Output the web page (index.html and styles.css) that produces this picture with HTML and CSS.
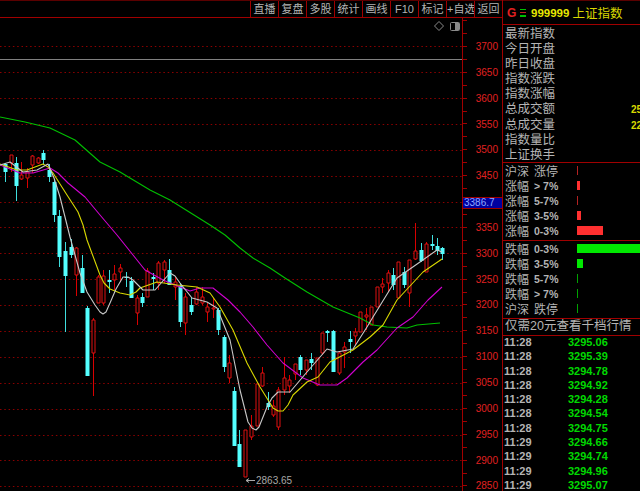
FILE: index.html
```html
<!DOCTYPE html>
<html lang="zh-CN">
<head>
    <meta charset="UTF-8">
    <title>999999 上证指数</title>
    <link rel="stylesheet" href="styles.css">
</head>
<body>
<div class="page">
    <div class="left">
        <div class="toolbar">
            <a>直播</a><a>复盘</a><a>多股</a><a>统计</a><a>画线</a><a>F10</a><a>标记</a><a>+自选</a><a>返回</a>
        </div>
        <div class="chart-row">
            <svg class="chart" viewBox="0 18 462 473" width="462" height="473">
                <g class="grid">
                    <path d="M0 46.5H462M0 72.5H462M0 98.5H462M0 124.5H462M0 150.5H462M0 176.5H462M0 202.5H462M0 227.5H462M0 253.5H462M0 279.5H462M0 305.5H462M0 331.5H462M0 357.5H462M0 383.5H462M0 409.5H462M0 435.5H462M0 460.5H462M0 486.5H462"/>
                </g>
                <path class="limit" d="M0 59.5H462"/>
                <!-- chart tools -->
                <path class="tool" d="M439 21.5l4.5 4.5-4.5 4.5-4.5-4.5z"/>
                <rect class="tool" x="450.5" y="22.5" width="9" height="8" rx="1"/>
                <rect class="tool-fill" x="455" y="23" width="4" height="7"/>

                <!-- candles, wicks first -->
                <path class="wick-dn" d="M5.5 163V182M16.5 157V201M43.5 150V164M49.5 164V182M54.5 180V222M59.5 210V267M65.5 242V332M71.5 239V258M82.5 255V293M87.5 306V376M109.5 270V293M126.5 272V287M131.5 277V298M142.5 293V307M153.5 273V290M169.5 259V285M180.5 283V327M191.5 297V315M218.5 308V335M224.5 335V372M234.5 387V446M239.5 430V467M268.5 392V410M300.5 355V375M311.5 353V370M327.5 330V342M333.5 330V372M350.5 331V353M393.5 268V290M404.5 267V288M421.5 243V262M432.5 235V250M437.5 238V255M442.5 247V260"/>
                <path class="wick-up" d="M11.5 155V172M21.5 162V180M27.5 168V188M32.5 155V173M38.5 157V164M76.5 247V296M93.5 318V396M98.5 275V303M103.5 270V305M114.5 265V290M120.5 264V282M137.5 295V325M147.5 268V297M158.5 261V290M164.5 260V283M175.5 277V300M185.5 293V335M196.5 287V305M202.5 287V305M207.5 303V322M213.5 298V318M229.5 355V383M245.5 430V477M251.5 415V440M257.5 384V426M262.5 367V387M273.5 400V417M278.5 387V430M284.5 357V395M289.5 375V393M295.5 364V380M306.5 360V375M317.5 358V386M322.5 333V355M339.5 352V375M344.5 342V368M355.5 328V345M360.5 312V332M366.5 308V330M371.5 307V325M377.5 287V307M382.5 278V293M388.5 270V292M398.5 262V298M409.5 260V307M415.5 223V260M426.5 242V272"/>
                <path class="body-up" d="M10 155h3V163h-3zM20 175h3V179h-3zM26 172h3V178h-3zM31 156h3V165h-3zM37 158h3V163h-3zM75 248h3V275h-3zM92 320h3V353h-3zM97 277h3V303h-3zM102 276h3V303h-3zM113 274h3V280h-3zM119 268h3V272h-3zM136 298h3V313h-3zM146 271h3V297h-3zM157 263h3V283h-3zM163 262h3V270h-3zM174 282h3V287h-3zM184 297h3V323h-3zM195 292h3V304h-3zM201 297h3V303h-3zM206 307h3V312h-3zM212 308h3V309h-3zM228 363h3V378h-3zM244 430h3V477h-3zM250 426h3V437h-3zM256 384h3V426h-3zM261 373h3V386h-3zM272 406h3V415h-3zM277 390h3V427h-3zM283 378h3V390h-3zM288 380h3V386h-3zM294 364h3V374h-3zM305 360h3V370h-3zM316 358h3V385h-3zM321 333h3V353h-3zM338 353h3V373h-3zM343 347h3V352h-3zM354 332h3V336h-3zM359 312h3V332h-3zM365 315h3V317h-3zM370 307h3V325h-3zM376 287h3V307h-3zM381 284h3V287h-3zM387 273h3V283h-3zM397 262h3V298h-3zM408 260h3V293h-3zM414 251h3V259h-3zM425 244h3V272h-3z"/>
                <path class="body-dn" d="M3.5 164h4V172h-4zM14.5 163h4V186h-4zM41.5 153h4V160h-4zM47.5 170h4V177h-4zM52.5 182h4V215h-4zM57.5 216h4V257h-4zM63.5 251h4V276h-4zM69.5 247h4V255h-4zM80.5 268h4V293h-4zM85.5 308h4V376h-4zM107.5 280h4V282h-4zM124.5 277h4V278h-4zM129.5 281h4V298h-4zM140.5 297h4V303h-4zM151.5 277h4V279h-4zM167.5 270h4V285h-4zM178.5 286h4V322h-4zM189.5 305h4V312h-4zM216.5 310h4V330h-4zM222.5 337h4V367h-4zM232.5 391h4V446h-4zM237.5 444h4V467h-4zM266.5 403h4V407h-4zM298.5 357h4V370h-4zM309.5 359h4V363h-4zM325.5 331h4V333h-4zM331.5 331h4V372h-4zM348.5 339h4V342h-4zM391.5 275h4V285h-4zM402.5 272h4V285h-4zM419.5 250h4V261h-4zM430.5 244h4V246h-4zM435.5 246h4V251h-4zM440.5 248h4V254h-4z"/>

                <!-- moving averages -->
                <polyline class="ma ma-green" points="0,117 25,122 50,128 75,140 100,162 120,172 150,190 170,200 210,225 225,235 240,248 253,258 270,268 285,278 307,292 333,307 360,318 373,325 387,327 407,328 417,325 440,323"/>
                <polyline class="ma ma-purple" points="0,165 20,173 33,173 50,168 58,173 68,183 85,197 100,215 117,235 133,255 145,270 163,280 180,287 190,291 200,288 213,288 228,300 240,312 253,327 267,345 283,363 303,378 320,385 337,385 347,378 363,362 377,350 397,328 413,317 428,300 442,287"/>
                <polyline class="ma ma-yellow" points="0,164 17,170 27,170 43,164 48,167 53,173 67,195 78,212 83,225 87,240 100,275 104,283 110,289 120,293 130,295 136,292 140,288 157,282 177,285 197,287 210,293 220,307 233,330 247,363 260,387 273,408 278,411 283,411 288,405 293,395 307,382 318,377 330,362 353,350 370,337 383,325 397,300 423,272 442,259"/>
                <polyline class="ma ma-white" points="0,165 10,162 23,172 37,170 48,164 54,178 60,197 70,237 80,273 87,292 95,305 100,312 103,314 106,312 110,303 116,289 123,277 128,277 133,280 143,290 155,290 162,282 170,273 175,276 180,283 192,298 207,302 217,308 230,340 240,390 248,422 252,428 256,430 259,427 267,407 272,398 278,392 290,392 307,372 327,349 337,352 353,349 367,327 373,317 397,278 420,262 437,250 442,252"/>

                <!-- lowest point -->
                <path class="low-arrow" d="M246 480.5H255M246 480.5l3-2M246 480.5l3 2"/>
                <text class="low-text" x="256" y="484">2863.65</text>
            </svg>
            <div class="axis">
                <span>3700</span><span>3650</span><span>3600</span><span>3550</span><span>3500</span><span>3450</span>
                <span>&nbsp;</span><span>3350</span><span>3300</span><span>3250</span><span>3200</span><span>3150</span>
                <span>3100</span><span>3050</span><span>3000</span><span>2950</span><span>2900</span><span>2850</span>
                <div class="price-tag">3386.7</div>
            </div>
        </div>
    </div>

    <div class="side">
        <div class="title">
            <span class="flag">G</span>
            <svg class="menu-icon" viewBox="0 0 6 8" width="6" height="8">
                <rect class="bar-g" width="6" height="1"/>
                <rect class="bar-r" y="3" width="6" height="1"/>
                <rect class="bar-g" y="6" width="6" height="2"/>
            </svg>
            <span class="code">999999</span>
            <span class="name">上证指数</span>
        </div>

        <div class="info">
            <div class="info-row">最新指数</div>
            <div class="info-row">今日开盘</div>
            <div class="info-row">昨日收盘</div>
            <div class="info-row">指数涨跌</div>
            <div class="info-row">指数涨幅</div>
            <div class="info-row">总成交额<b>25</b></div>
            <div class="info-row">总成交量<b>22</b></div>
            <div class="info-row">指数量比</div>
            <div class="info-row">上证换手</div>
        </div>

        <div class="dist rise">
            <div class="dist-row"><span class="label">沪深</span><span class="range">涨停</span><i class="thin"></i></div>
            <div class="dist-row"><span class="label">涨幅</span><span class="range num">&gt; 7%</span><i class="w3"></i></div>
            <div class="dist-row"><span class="label">涨幅</span><span class="range num">5-7%</span><i class="thin"></i></div>
            <div class="dist-row"><span class="label">涨幅</span><span class="range num">3-5%</span><i class="w4"></i></div>
            <div class="dist-row"><span class="label">涨幅</span><span class="range num">0-3%</span><i class="w26"></i></div>
        </div>

        <div class="dist fall">
            <div class="dist-row"><span class="label">跌幅</span><span class="range num">0-3%</span><i class="w63"></i></div>
            <div class="dist-row"><span class="label">跌幅</span><span class="range num">3-5%</span><i class="w6"></i></div>
            <div class="dist-row"><span class="label">跌幅</span><span class="range num">5-7%</span><i class="thin"></i></div>
            <div class="dist-row"><span class="label">跌幅</span><span class="range num">&gt; 7%</span><i class="thin"></i></div>
            <div class="dist-row"><span class="label">沪深</span><span class="range">跌停</span><i class="thin"></i></div>
        </div>

        <div class="promo">仅需20元查看千档行情</div>

        <div class="ticks">
            <div class="tick"><span>11:28</span><b>3295.06</b></div>
            <div class="tick"><span>11:28</span><b>3295.39</b></div>
            <div class="tick"><span>11:28</span><b>3294.78</b></div>
            <div class="tick"><span>11:28</span><b>3294.92</b></div>
            <div class="tick"><span>11:28</span><b>3294.28</b></div>
            <div class="tick"><span>11:28</span><b>3294.54</b></div>
            <div class="tick"><span>11:28</span><b>3294.75</b></div>
            <div class="tick"><span>11:29</span><b>3294.66</b></div>
            <div class="tick"><span>11:29</span><b>3294.74</b></div>
            <div class="tick"><span>11:29</span><b>3294.96</b></div>
            <div class="tick"><span>11:29</span><b>3295.07</b></div>
        </div>
    </div>
</div>
</body>
</html>
```

FILE: styles.css
```css
body {
    margin: 0;
    background-color: #000;
    color: #b4b4b4;
    font-family: "Liberation Sans", "Noto Sans CJK SC", sans-serif;
    overflow: hidden;
}
.page {
    display: flex;
    width: 640px;
    height: 491px;
    overflow: hidden;
}
.left {
    width: 502px;
    flex: none;
}

/* toolbar */
.toolbar {
    display: flex;
    justify-content: flex-end;
    box-sizing: border-box;
    height: 18px;
    border-top: 1px solid #5a0000;
    border-bottom: 1px solid #a00000;
}
.toolbar a {
    box-sizing: border-box;
    width: 28px;
    border-left: 1px solid #a00000;
    font-size: 11px;
    line-height: 17px;
    text-align: center;
    white-space: nowrap;
    overflow: hidden;
}

/* chart */
.chart-row {
    display: flex;
    height: 473px;
}
.chart {
    display: block;
    flex: none;
}
.grid path {
    fill: none;
    stroke: #8c0000;
    stroke-dasharray: 1.5 2.8;
}
.limit {
    stroke: #808080;
    fill: none;
}
.tool {
    fill: none;
    stroke: #8a8a8a;
}
.tool-fill {
    fill: #8a8a8a;
}
.wick-dn {
    fill: none;
    stroke: #3fdede;
}
.wick-up {
    fill: none;
    stroke: #d80000;
}
.body-up {
    fill: #000;
    stroke: #e01010;
}
.body-dn {
    fill: #54ffff;
}
.ma {
    fill: none;
    stroke-width: 1.1;
    stroke-linejoin: round;
}
.ma-green { stroke: #00c000; }
.ma-purple { stroke: #d000d0; }
.ma-yellow { stroke: #d8d800; }
.ma-white { stroke: #c8c8c8; }
.low-arrow {
    fill: none;
    stroke: #a8a8a8;
}
.low-text {
    fill: #a8a8a8;
    font-size: 10px;
}

/* price axis */
.axis {
    position: relative;
    box-sizing: border-box;
    width: 40px;
    padding-top: 16px;
    border-left: 1px solid #a00000;
    background-image: repeating-linear-gradient(#a00000 0, #a00000 1px, transparent 1px, transparent 12.93px);
    background-size: 4px 100%;
    background-position: 0 2px;
    background-repeat: no-repeat;
}
.axis span {
    display: block;
    height: 25.85px;
    padding-right: 4px;
    font-size: 10px;
    line-height: 25.85px;
    text-align: right;
    color: #e02020;
}
.price-tag {
    position: absolute;
    left: 0;
    right: 0;
    top: 179px;
    height: 12px;
    box-sizing: border-box;
    padding-left: 1px;
    border-top: 1px solid #a00000;
    border-bottom: 1px solid #a00000;
    background-color: #0000a0;
    color: #8fa8ff;
    font-size: 10px;
    line-height: 10px;
}

/* right side */
.side {
    flex: 1;
    min-width: 0;
    border-left: 1px solid #a00000;
    overflow: hidden;
}
.title {
    display: flex;
    align-items: center;
    box-sizing: border-box;
    height: 25px;
    padding-left: 4px;
    border-top: 1px solid #5a0000;
    border-bottom: 1px solid #a00000;
}
.flag {
    width: 12px;
    color: #e02020;
    font-size: 12px;
    font-weight: bold;
}
.menu-icon {
    margin: 0 5px 0 1px;
}
.bar-g { fill: #00c000; }
.bar-r { fill: #c02020; }
.code {
    color: #e8e800;
    font-size: 11.5px;
    font-weight: bold;
}
.name {
    margin-left: 3px;
    color: #d8d800;
    font-size: 12.5px;
}

.info {
    box-sizing: border-box;
    height: 138px;
    padding: 2px 0 0 2px;
    border-bottom: 1px solid #a00000;
}
.info-row {
    position: relative;
    height: 15.1px;
    font-size: 12.5px;
    line-height: 15.1px;
    white-space: nowrap;
}
.info-row b {
    position: absolute;
    left: 126px;
    color: #d8d800;
    font-size: 10px;
}

.dist {
    box-sizing: border-box;
    height: 78px;
    padding-left: 2px;
    border-bottom: 1px solid #a00000;
}
.dist-row {
    display: flex;
    align-items: center;
    height: 15.1px;
    font-size: 12px;
    white-space: nowrap;
}
.label {
    width: 29px;
    flex: none;
}
.range {
    width: 43px;
    flex: none;
}
.range.num {
    font-size: 10.5px;
    font-weight: bold;
}
.dist-row i {
    display: block;
    height: 9px;
}
.rise i { background-color: #ff3030; }
.fall i { background-color: #00e800; }
.dist-row .thin { width: 1px; opacity: 0.7; }
.dist-row .w3 { width: 3px; }
.dist-row .w4 { width: 4px; }
.dist-row .w6 { width: 6px; }
.dist-row .w26 { width: 26px; }
.dist-row .w63 { width: 63px; }

.promo {
    box-sizing: border-box;
    height: 17px;
    padding-left: 2px;
    border-bottom: 1px solid #a00000;
    font-size: 12.5px;
    line-height: 15px;
    white-space: nowrap;
}
.ticks {
    padding-left: 1px;
}
.tick {
    display: flex;
    height: 14.3px;
    font-size: 11px;
    line-height: 12.5px;
    font-weight: bold;
}
.tick span {
    width: 64px;
}
.tick b {
    color: #00d800;
}
```
